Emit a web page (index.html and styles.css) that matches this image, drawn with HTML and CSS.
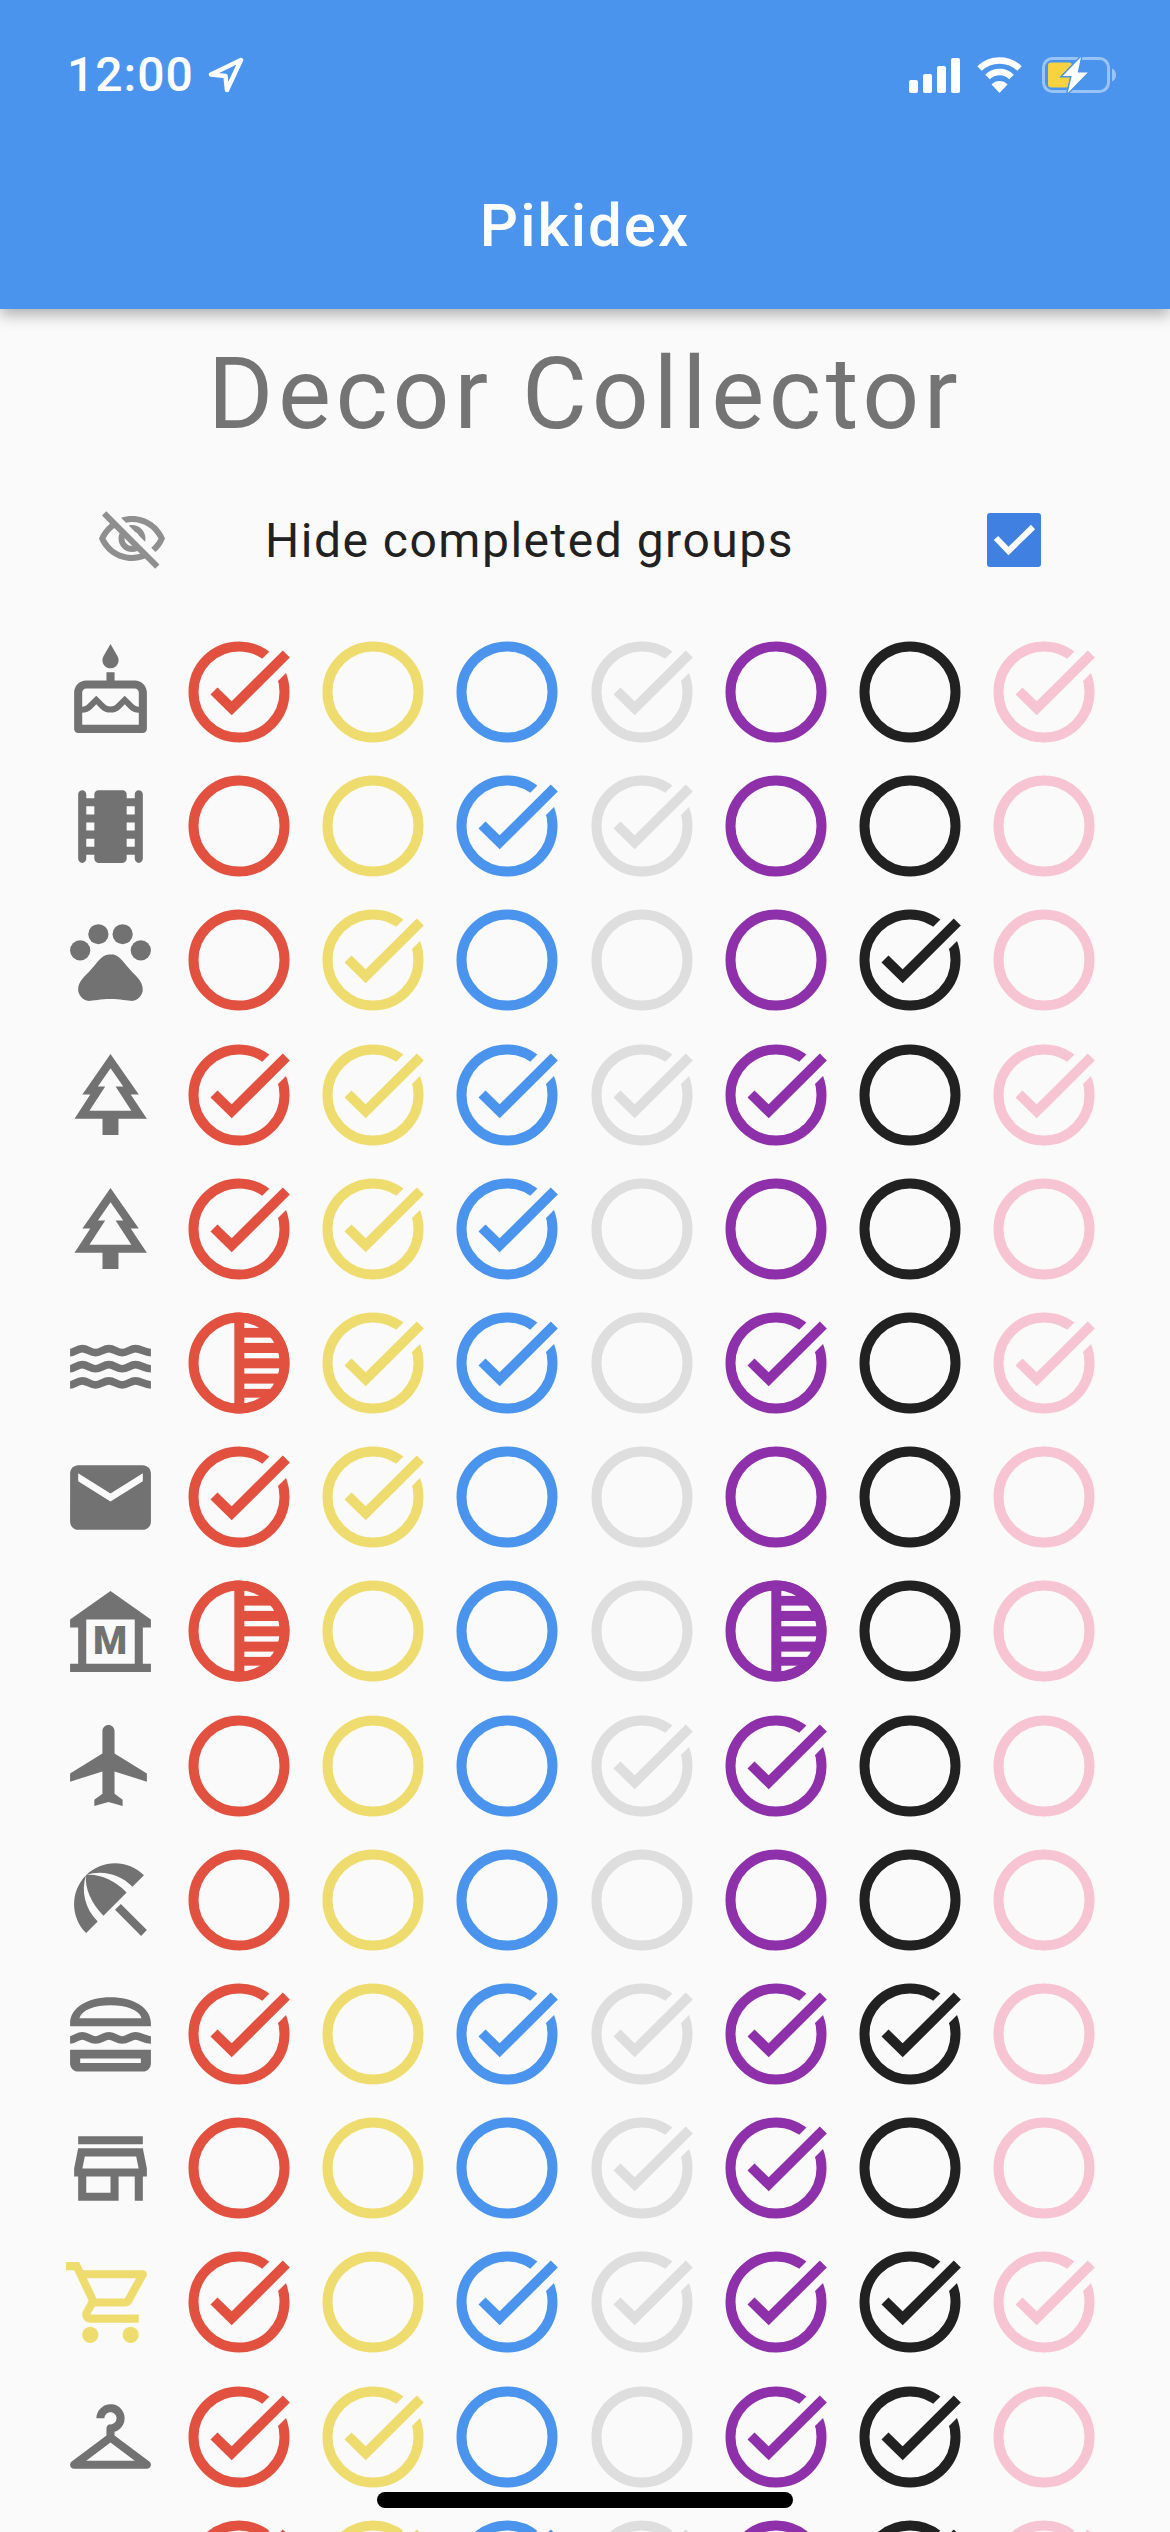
FILE: index.html
```html
<!DOCTYPE html>
<html lang="en">
  <head>
    <meta charset="UTF-8" />
    <meta name="viewport" content="width=device-width, initial-scale=1.0" />
    <title>Pikidex</title>
    <link rel="stylesheet" href="styles.css">
  </head>
  <body>
    <!-- Shared icons, used through <use> -->
    <svg class="sprite" xmlns="http://www.w3.org/2000/svg">
      <defs>
        <clipPath id="innerClip"><circle r="40.7" /></clipPath>
        <clipPath id="outerClip"><circle r="50.5" /></clipPath>
      </defs>

      <!-- Group marks -->
      <symbol id="mark-open" viewBox="-60 -60 120 120">
        <circle class="ring" r="45.5" />
      </symbol>
      <symbol id="mark-done" viewBox="-60 -60 120 120">
        <circle class="ring" r="45.5" />
        <path class="ring-gap" d="M0 9L60 -51" />
        <path class="ring" d="M-25 -1L-7.3 16.3L47.3 -38" />
      </symbol>
      <symbol id="mark-half" viewBox="-60 -60 120 120">
        <circle class="ring" r="45.5" />
        <rect class="half-fill" x="-4.7" y="-51" width="56" height="102" clip-path="url(#outerClip)" />
        <g class="half-lines" clip-path="url(#innerClip)">
          <rect x="5.3" y="-40.4" width="40" height="5.3" />
          <rect x="5.3" y="-25.4" width="40" height="5.3" />
          <rect x="5.3" y="-10" width="40" height="5.3" />
          <rect x="5.3" y="5.3" width="40" height="5.3" />
          <rect x="5.3" y="20.6" width="40" height="5.3" />
          <rect x="5.3" y="34.7" width="40" height="5.3" />
        </g>
      </symbol>

      <!-- Category icons -->
      <symbol id="icon-cake" viewBox="0 0 24 24">
        <path d="M12 6c1.11 0 2-.9 2-2 0-.38-.1-.73-.29-1.03L12 0l-1.71 2.97c-.19.3-.29.65-.29 1.03 0 1.1.9 2 2 2zm6 3h-5V7h-2v2H6c-1.66 0-3 1.34-3 3v9c0 .55.45 1 1 1h16c.55 0 1-.45 1-1v-9c0-1.66-1.34-3-3-3zm1 11H5v-3c.9-.01 1.76-.37 2.4-1.01l1.09-1.07 1.07 1.07c1.31 1.31 3.59 1.3 4.89 0l1.08-1.07 1.07 1.07c.64.64 1.5 1 2.4 1.01v3zm0-4.5c-.51-.01-.99-.2-1.35-.57l-2.13-2.13-2.14 2.13c-.74.74-2.03.74-2.77 0L8.48 12.8l-2.14 2.13c-.35.36-.83.56-1.34.57V12c0-.55.45-1 1-1h12c.55 0 1 .45 1 1v3.5z" />
      </symbol>
      <symbol id="icon-movie" viewBox="0 0 24 24">
        <path d="M18 4v1h-2V4c0-.55-.45-1-1-1H9c-.55 0-1 .45-1 1v1H6V4c0-.55-.45-1-1-1s-1 .45-1 1v16c0 .55.45 1 1 1s1-.45 1-1v-1h2v1c0 .55.45 1 1 1h6c.55 0 1-.45 1-1v-1h2v1c0 .55.45 1 1 1s1-.45 1-1V4c0-.55-.45-1-1-1s-1 .45-1 1zM8 17H6v-2h2v2zm0-4H6v-2h2v2zm0-4H6V7h2v2zm10 8h-2v-2h2v2zm0-4h-2v-2h2v2zm0-4h-2V7h2v2z" />
      </symbol>
      <symbol id="icon-paw" viewBox="0 0 24 24">
        <circle cx="4.5" cy="9.5" r="2.5" />
        <circle cx="9" cy="5.5" r="2.5" />
        <circle cx="15" cy="5.5" r="2.5" />
        <circle cx="19.5" cy="9.5" r="2.5" />
        <path d="M17.34 14.86c-.87-1.02-1.6-1.89-2.48-2.91-.46-.54-1.05-1.08-1.75-1.32-.11-.04-.22-.07-.33-.09-.25-.04-.52-.04-.78-.04s-.53 0-.79.05c-.11.02-.22.05-.33.09-.7.24-1.28.78-1.75 1.32-.87 1.02-1.6 1.89-2.48 2.91-1.31 1.31-2.92 2.76-2.62 4.79.29 1.02 1.02 2.03 2.33 2.32.73.15 3.06-.44 5.54-.44h.18c2.48 0 4.81.58 5.54.44 1.31-.29 2.04-1.31 2.33-2.32.31-2.04-1.3-3.49-2.61-4.8z" />
      </symbol>
      <symbol id="icon-tree" viewBox="0 0 24 24">
        <path d="M17 12h2L12 2 5.05 12H7l-3.9 6h6.92v4h3.95v-4H21l-4-6zM6.79 16l3.9-6H8.88l3.13-4.5 3.15 4.5h-1.9l3.9 6H6.79z" />
      </symbol>
      <symbol id="icon-waves" viewBox="0 0 24 24">
        <path class="wave" d="M2 9.3C3 9.3 3.7 8.3 5 8.3S7 9.3 8.3 9.3S10.3 8.3 11.6 8.3S13.6 9.3 14.9 9.3S16.9 8.3 18.2 8.3S20.5 9.3 22 9.3" />
        <path class="wave" d="M2 13.3C3 13.3 3.7 12.3 5 12.3S7 13.3 8.3 13.3S10.3 12.3 11.6 12.3S13.6 13.3 14.9 13.3S16.9 12.3 18.2 12.3S20.5 13.3 22 13.3" />
        <path class="wave" d="M2 17.3C3 17.3 3.7 16.3 5 16.3S7 17.3 8.3 17.3S10.3 16.3 11.6 16.3S13.6 17.3 14.9 17.3S16.9 16.3 18.2 16.3S20.5 17.3 22 17.3" />
      </symbol>
      <symbol id="icon-mail" viewBox="0 0 24 24">
        <path d="M20 4H4c-1.1 0-1.99.9-1.99 2L2 18c0 1.1.9 2 2 2h16c1.1 0 2-.9 2-2V6c0-1.1-.9-2-2-2zm0 4l-8 5-8-5V6l8 5 8-5v2z" />
      </symbol>
      <symbol id="icon-museum" viewBox="0 0 24 24">
        <path d="M22 11V9L12 2 2 9v2h2v9H2v2h20v-2h-2v-9h2zm-4 9H6V9h12v11z" />
      </symbol>
      <symbol id="icon-plane" viewBox="0 0 24 24">
        <path d="M21 16v-2l-8-5V3.5c0-.83-.67-1.5-1.5-1.5S10 2.67 10 3.5V9l-8 5v2l8-2.5V19l-2 1.5V22l3.5-1 3.5 1v-1.5L13 19v-5.5l8 2.5z" />
      </symbol>
      <symbol id="icon-beach" viewBox="0 0 24 24">
        <path d="M13.127 14.56l1.43-1.43 6.44 6.443L19.57 21zm4.293-5.73l2.86-2.86c-3.95-3.95-10.35-3.96-14.3-.02 3.93-1.3 8.31-.25 11.44 2.88zM5.95 5.98c-3.94 3.95-3.93 10.35.02 14.3l2.86-2.86C5.7 14.29 4.65 9.91 5.95 5.98zm.02-.02l-.01.01c-.38 3.01 1.17 6.88 4.3 10.02l5.73-5.73c-3.13-3.13-7.01-4.68-10.02-4.3z" />
      </symbol>
      <symbol id="icon-burger" viewBox="0 0 24 24">
        <path fill-rule="evenodd" d="M2 10.2V9.5C2 5.5 6.5 3 12 3s10 2.5 10 6.5v.7H2zM4.3 8.2h15.4C19 6 15.8 5 12 5S5 6 4.3 8.2z" />
        <path class="wave" d="M2 13.6C3 13.6 3.7 12.6 5 12.6S7 13.6 8.3 13.6S10.3 12.6 11.6 12.6S13.6 13.6 14.9 13.6S16.9 12.6 18.2 12.6S20.5 13.6 22 13.6" />
        <path fill-rule="evenodd" d="M2 16h20v3.4c0 1.1-.9 2-2 2H4c-1.1 0-2-.9-2-2V16zM4.5 18.2v1.1h15v-1.1h-15z" />
      </symbol>
      <symbol id="icon-store" viewBox="0 0 24 24">
        <path d="M20 4H4v2h16V4zm1 10v-2l-1-5H4l-1 5v2h1v6h10v-6h4v6h2v-6h1zm-9 4H6v-4h6v4zm-6.96-6l.6-3h12.72l.6 3H5.04z" />
      </symbol>
      <symbol id="icon-cart" viewBox="0 0 24 24">
        <path d="M15.55 13c.75 0 1.41-.41 1.75-1.03l3.58-6.49c.37-.66-.11-1.48-.87-1.48H5.21l-.94-2H1v2h2l3.6 7.59-1.35 2.44C4.52 15.37 5.48 17 7 17h12v-2H7l1.1-2h7.45zM6.16 6h12.15l-2.76 5H8.53L6.16 6zM7 18c-1.1 0-1.99.9-1.99 2S5.9 22 7 22s2-.9 2-2-.9-2-2-2zm10 0c-1.1 0-1.99.9-1.99 2s.89 2 1.99 2 2-.9 2-2-.9-2-2-2z" />
      </symbol>
      <symbol id="icon-hanger" viewBox="0 0 24 24">
        <path d="M21.6 18.2L13 11.75v-.91c1.65-.49 2.8-2.17 2.43-4.05-.26-1.31-1.3-2.4-2.61-2.7C10.54 3.57 8.5 5.3 8.5 7.5h2c0-.83.67-1.5 1.5-1.5s1.5.67 1.5 1.5c0 .84-.69 1.52-1.53 1.5-.54-.01-.97.45-.97.99v1.76L2.4 18.2c-.77.58-.36 1.8.6 1.8h18c.96 0 1.37-1.22.6-1.8zM6 18l6-4.5 6 4.5H6z" />
      </symbol>
    </svg>

    <header class="app-bar">
      <div class="status-bar">
        <div class="status-left">
          <span class="clock">12:00</span>
          <svg class="location" viewBox="0 0 36 36">
            <path d="M33 3L3 17.5L17.5 19L19 33Z" />
          </svg>
        </div>
        <div class="status-right">
          <div class="signal">
            <span class="bar bar-1"></span>
            <span class="bar bar-2"></span>
            <span class="bar bar-3"></span>
            <span class="bar bar-4"></span>
          </div>
          <svg class="wifi" viewBox="0 0 47 36">
            <path class="wifi-arc" d="M3.5 11.5A29 29 0 0 1 43.5 11.5" />
            <path class="wifi-arc" d="M11.5 20A17 17 0 0 1 35.5 20" />
            <path class="wifi-dot" d="M23.5 36L15.5 27.5A11 11 0 0 1 31.5 27.5Z" />
          </svg>
          <svg class="battery" viewBox="0 0 75 38">
            <rect class="battery-case" x="1.5" y="2.5" width="65" height="33" rx="9" />
            <rect class="battery-level" x="6" y="6.5" width="24" height="25" rx="3" />
            <path class="battery-nub" d="M70 12.5c2.5 1 4 3.4 4 6.5s-1.5 5.5-4 6.5z" />
            <path class="battery-bolt" d="M39 1L20.7 20H29.7L25.7 37L45.7 16.5H35.7Z" />
          </svg>
        </div>
      </div>
      <div class="bar-title">Pikidex</div>
    </header>

    <h1 class="page-title">Decor Collector</h1>

    <div class="hide-row">
      <svg class="hide-icon" viewBox="0 0 24 24">
        <path d="M12 6c3.79 0 7.17 2.13 8.82 5.5-.59 1.22-1.42 2.27-2.41 3.12l1.41 1.41c1.39-1.23 2.49-2.77 3.18-4.53C21.27 7.11 17 4 12 4c-1.27 0-2.49.2-3.64.57l1.65 1.65C10.66 6.09 11.32 6 12 6zm-1.07 1.14L13 9.21c.57.25 1.03.71 1.28 1.28l2.07 2.07c.08-.34.14-.7.14-1.07C16.5 9.01 14.48 7 12 7c-.37 0-.72.05-1.07.14zM2.01 3.87l2.68 2.68C3.06 7.83 1.77 9.53 1 11.5 2.73 15.89 7 19 12 19c1.52 0 2.98-.29 4.32-.82l3.42 3.42 1.41-1.41L3.42 2.45 2.01 3.87zm7.5 7.5l2.61 2.61c-.04.01-.08.02-.12.02-1.38 0-2.5-1.12-2.5-2.5 0-.05.01-.08.01-.13zm-3.4-3.4l1.75 1.75c-.23.55-.36 1.15-.36 1.78 0 2.48 2.02 4.5 4.5 4.5.63 0 1.23-.13 1.77-.36l.98.98c-.88.24-1.8.38-2.75.38-3.79 0-7.17-2.13-8.82-5.5.7-1.43 1.72-2.61 2.93-3.53z" />
      </svg>
      <span class="hide-label">Hide completed groups</span>
      <span class="checkbox">
        <svg class="checkbox-tick" viewBox="0 0 54 54">
          <path d="M9 25L21.5 38L46 14" />
        </svg>
      </span>
    </div>

    <div class="grid" id="grid"></div>

    <div class="home-indicator"></div>

    <script>
      const colors = ["red", "yellow", "blue", "gray", "purple", "black", "pink"];
      const markNames = { o: "open", c: "done", h: "half" };

      // One row per category: icon, then one letter per colour
      const rows = [
        ["cake", "coocooc"],
        ["movie", "ooccooo"],
        ["paw", "ocoooco"],
        ["tree", "cccccoc"],
        ["tree", "cccoooo"],
        ["waves", "hccococ"],
        ["mail", "ccooooo"],
        ["museum", "hooohoo"],
        ["plane", "oooccoo"],
        ["beach", "ooooooo"],
        ["burger", "cocccco"],
        ["store", "oooccoo"],
        ["cart", "coccccc"],
        ["hanger", "ccoocco"],
        ["", "ccccocc"],
      ];

      function createIcon(className, symbolId) {
        const svg = document.createElementNS("http://www.w3.org/2000/svg", "svg");
        svg.setAttribute("class", className);
        const use = document.createElementNS("http://www.w3.org/2000/svg", "use");
        use.setAttribute("href", "#" + symbolId);
        svg.appendChild(use);
        return svg;
      }

      const grid = document.getElementById("grid");

      rows.forEach(([icon, marks]) => {
        const iconCell = document.createElement("div");
        iconCell.classList.add("cell");
        if (icon) {
          const activeCart = icon === "cart" ? " category-active" : "";
          iconCell.appendChild(createIcon("category" + activeCart, "icon-" + icon));
        }
        // The museum icon carries a real letter on top of its shape
        if (icon === "museum") {
          const letter = document.createElement("span");
          letter.classList.add("museum-letter");
          letter.textContent = "M";
          iconCell.appendChild(letter);
        }
        grid.appendChild(iconCell);

        colors.forEach((color, i) => {
          const cell = document.createElement("div");
          cell.classList.add("cell");
          cell.appendChild(createIcon("mark " + color, "mark-" + markNames[marks[i]]));
          grid.appendChild(cell);
        });
      });
    </script>
  </body>
</html>
```

FILE: styles.css
```css
body {
  margin: 0;
  height: 2532px;
  overflow: hidden;
  position: relative;
  background-color: #fafafa;
  font-family: Roboto, sans-serif;
}

.sprite {
  position: absolute;
  width: 0;
  height: 0;
}

/* App bar */
.app-bar {
  height: 309px;
  box-sizing: border-box;
  padding-top: 57px;
  background-color: #4a94ee;
  box-shadow: 0 6px 14px rgba(0, 0, 0, 0.3);
  color: white;
}

.status-bar {
  display: flex;
  justify-content: space-between;
  height: 36px;
  padding: 0 53px 0 67px;
}

.status-left,
.status-right {
  display: flex;
  align-items: center;
}

.clock {
  font-size: 48px;
  font-weight: 500;
  line-height: 36px;
  letter-spacing: 1px;
}

.location {
  width: 36px;
  height: 36px;
  margin-left: 14px;
}

.location path {
  fill: none;
  stroke: white;
  stroke-width: 4.5;
  stroke-linejoin: round;
}

.signal {
  display: flex;
  align-items: flex-end;
  gap: 5px;
  height: 35px;
}

.bar {
  width: 9px;
  border-radius: 2px;
  background-color: white;
}

.bar-1 {
  height: 13px;
}

.bar-2 {
  height: 19px;
}

.bar-3 {
  height: 27px;
}

.bar-4 {
  height: 35px;
}

.wifi {
  width: 47px;
  height: 36px;
  margin-left: 16px;
}

.wifi-arc {
  fill: none;
  stroke: white;
  stroke-width: 6.5;
}

.wifi-dot {
  fill: white;
}

.battery {
  width: 75px;
  height: 38px;
  margin-left: 19px;
}

.battery-case {
  fill: none;
  stroke: rgba(255, 255, 255, 0.45);
  stroke-width: 3;
}

.battery-level {
  fill: #f8d23f;
}

.battery-nub {
  fill: rgba(255, 255, 255, 0.45);
}

.battery-bolt {
  fill: white;
  stroke: #4a94ee;
  stroke-width: 3;
  paint-order: stroke;
}

.bar-title {
  margin-top: 97px;
  text-align: center;
  font-size: 60px;
  font-weight: 500;
  letter-spacing: 2px;
}

/* Page heading */
.page-title {
  margin: 26px 0 52px;
  text-align: center;
  font-size: 100px;
  font-weight: 400;
  letter-spacing: 4.6px;
  color: #747474;
}

.hide-row {
  display: flex;
  align-items: center;
  height: 72px;
  padding: 0 129px 0 96px;
}

.hide-icon {
  width: 72px;
  height: 72px;
  fill: #8f8f8f;
}

.hide-label {
  margin-left: 97px;
  font-size: 48px;
  letter-spacing: 1.5px;
  color: #212121;
}

.checkbox {
  width: 54px;
  height: 54px;
  margin-left: auto;
  border-radius: 3px;
  background-color: #3f80e0;
}

.checkbox-tick {
  display: block;
  width: 54px;
  height: 54px;
}

.checkbox-tick path {
  fill: none;
  stroke: white;
  stroke-width: 6;
}

/* Collection grid */
.grid {
  display: grid;
  grid-template-columns: 124px repeat(7, 134.2px);
  grid-auto-rows: 134.2px;
  margin-top: 49px;
  padding-left: 48px;
}

.cell {
  position: relative;
  display: flex;
  align-items: center;
  justify-content: center;
}

.category {
  width: 97px;
  height: 97px;
  fill: #727272;
}

.category-active {
  fill: #efdc6f;
}

.wave {
  fill: none;
  stroke: #727272;
  stroke-width: 1.9;
}

.museum-letter {
  position: absolute;
  margin-top: 21px;
  font-size: 39px;
  font-weight: 900;
  line-height: 1;
  color: #727272;
}

.mark {
  flex: none;
  width: 120px;
  height: 120px;
}

.ring {
  fill: none;
  stroke: currentColor;
  stroke-width: 10;
}

.ring-gap {
  fill: none;
  stroke: #fafafa;
  stroke-width: 27;
}

.half-fill {
  fill: currentColor;
}

.half-lines {
  fill: #fafafa;
}

.red {
  color: #e2503f;
}

.yellow {
  color: #efdc6f;
}

.blue {
  color: #4a94ee;
}

.gray {
  color: #dedede;
}

.purple {
  color: #8e30aa;
}

.black {
  color: #212121;
}

.pink {
  color: #f6c4d2;
}

.home-indicator {
  position: absolute;
  left: 377px;
  top: 2492px;
  width: 416px;
  height: 16px;
  border-radius: 8px;
  background-color: #000;
}
```
